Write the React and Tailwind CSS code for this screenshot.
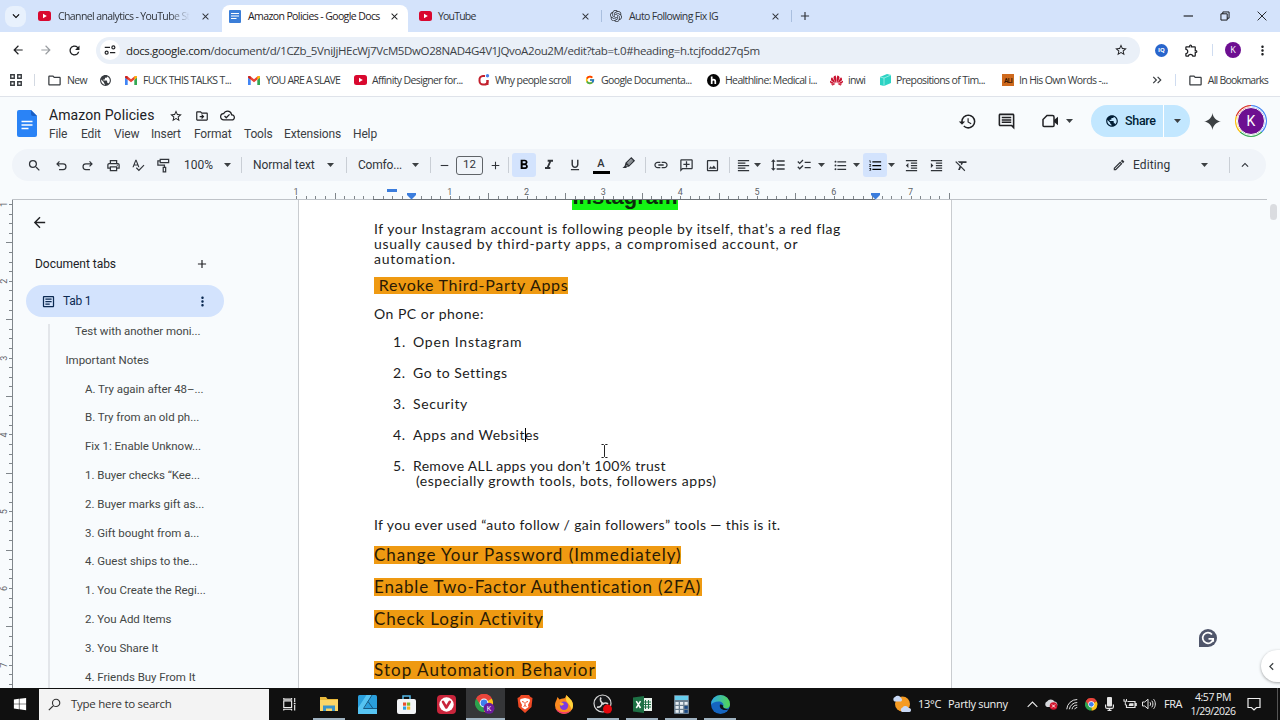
import clsx from "clsx";
import {
  MdAdd, MdArrowBack, MdArrowForward, MdChecklist, MdClose, MdFormatAlignLeft, MdFormatBold,
  MdFormatClear, MdFormatIndentDecrease, MdFormatIndentIncrease, MdFormatItalic, MdFormatLineSpacing,
  MdFormatListBulleted, MdFormatListNumbered, MdFormatUnderlined, MdHistory, MdKeyboardArrowDown,
  MdKeyboardArrowLeft, MdKeyboardArrowUp, MdLink, MdMoreVert, MdOutlineAddComment, MdOutlineArticle,
  MdOutlineCloudDone, MdOutlineComment, MdOutlineDriveFileMove, MdOutlineEdit, MdOutlineExtension,
  MdOutlineFolder, MdOutlineImage, MdOutlinePrint, MdPublic, MdRefresh, MdRemove, MdSearch, MdSpellcheck,
  MdStarBorder,
} from "react-icons/md";
import { SiOpenai, SiHuawei } from "react-icons/si";
import { FcGoogle } from "react-icons/fc";
import { FaWindows } from "react-icons/fa";

const UI = "font-['Open_Sans',sans-serif]";
const DOCS = "font-[Roboto,sans-serif]";

/* ---------- logos ---------- */

const YouTube = () => (
  <svg width="13" height="10" viewBox="0 0 13 10">
    <rect width="13" height="10" rx="2.5" fill="#d9082f" />
    <path d="M5 2.8 8.8 5 5 7.2Z" fill="#fff" />
  </svg>
);

const DocsFavicon = () => (
  <svg width="12" height="13" viewBox="0 0 12 13" className="shrink-0">
    <rect width="12" height="13" rx="1" fill="#3b7ed8" />
    <path d="M2 3.5h8M2 6h8M2 8.500h5.500" stroke="#fff" strokeWidth="1.2" />
  </svg>
);

const Gmail = () => (
  <svg width="12" height="9" viewBox="0 0 12 9">
    <path d="M0 1.500V9h2.700V4Z" fill="#4285f4" />
    <path d="M12 1.500V9H9.300V4Z" fill="#34a853" />
    <path d="M0 1.500C0 0 1.600-.4 2.700.6L6 3.200 9.300.6C10.400-.4 12 0 12 1.500L6 6.300Z" fill="#ea4335" />
    <path d="M9.300.6C10.400-.4 12 0 12 1.500L9.300 3.700Z" fill="#fbbc04" />
    <path d="M0 1.500C0 0 1.600-.4 2.700.6v3.100Z" fill="#c5221f" />
  </svg>
);

const DocsLogo = () => (
  <svg width="20" height="27" viewBox="0 0 20 27">
    <path d="M2 0h12l6 6v19a2 2 0 0 1-2 2H2a2 2 0 0 1-2-2V2a2 2 0 0 1 2-2Z" fill="#2a83f6" />
    <path d="M14 0v4a2 2 0 0 0 2 2h4Z" fill="#1a5fc4" />
    <path d="M4.500 11.500h11M4.500 15h11M4.500 18.500h7" stroke="#fff" strokeWidth="1.500" />
  </svg>
);

const Chrome = ({ size = 18, badge }) => (
  <svg width={size + 2} height={size + 2} viewBox="0 0 20 20">
    <path d="M9 9 1.200 4.500A9 9 0 0 1 16.800 4.500Z" fill="#e8453c" />
    <path d="M9 9 16.800 4.500A9 9 0 0 1 9 18Z" fill="#fbc116" />
    <path d="M9 9v9A9 9 0 0 1 1.200 4.500Z" fill="#2ca24c" />
    <path d="M9 5h7.200l.6-.5A9 9 0 0 0 1.200 4.500L5.500 11Z" fill="#e8453c" />
    <circle cx="9" cy="9" r="4.400" fill="#fff" />
    <circle cx="9" cy="9" r="3.400" fill="#3f7fee" />
    {badge && (
      <>
        <circle cx="14" cy="14.300" r="5.500" fill="#6a1b9a" />
        <text x="14" y="16.800" textAnchor="middle" fontSize="7" fill="#fff" fontFamily="Roboto">K</text>
      </>
    )}
  </svg>
);

const Why = () => (
  <svg width="12" height="12" viewBox="0 0 12 12" fill="none">
    <path d="M7 2H5a3.500 3.500 0 0 0-3.500 4v1A3.500 3.500 0 0 0 5 10.500h1.500A3 3 0 0 0 9.500 8V6" stroke="#c3202d" strokeWidth="2" />
    <path d="M9.500 6v5" stroke="#c3202d" strokeWidth="2" />
    <circle cx="9.500" cy="1.800" r="1.700" fill="#4a80e8" />
  </svg>
);

const Healthline = () => (
  <svg width="13" height="13" viewBox="0 0 13 13">
    <circle cx="6.500" cy="6.500" r="6.500" fill="#050505" />
    <path d="M4.700 2.500v7.500M4.700 7.500c0-2.400 3.600-2.400 3.600 0V10" stroke="#fff" strokeWidth="1.700" fill="none" />
  </svg>
);

const GreenBook = () => (
  <svg width="11" height="12" viewBox="0 0 11 12">
    <path d="M0 3 7 0l4 1v8l-7 3-4-1Z" fill="#2cd3c4" />
    <path d="M0 3l4 1 7-3M4 4v8" stroke="#a5f3ea" strokeWidth=".8" fill="none" />
  </svg>
);

const AliIcon = () => (
  <svg width="12" height="12" viewBox="0 0 12 12">
    <rect width="12" height="12" fill="#cf6a1d" />
    <text x="6" y="8.500" textAnchor="middle" fontSize="6.500" fontWeight="700" fill="#3a1a05" fontFamily="Roboto">ALI</text>
  </svg>
);

/* ---------- small drawn icons ---------- */

const Line = ({ size = 14, d, w = 1.5, vb = "0 0 16 16" }) => (
  <svg width={size} height={size} viewBox={vb} className="shrink-0" fill="none" stroke="currentColor" strokeWidth={w}>
    <path d={d} />
  </svg>
);

const Undo = () => <Line size={13} d="M5.500 3 2.500 6l3 3M2.500 6H10a3.500 3.500 0 0 1 0 7H5" />;
const Redo = () => <Line size={13} d="M10.500 3l3 3-3 3M13.500 6H6a3.500 3.500 0 0 0 0 7h5" />;
const PaintRoller = () => <Line size={15} d="M4.500 1.500h9v3.500h-9ZM4.500 3H2v4.500h7V10M7.700 10h2.600v4.800H7.700Z" w={1.300} />;
const Apps = () => <Line size={14} d="M2 2h4v4H2ZM10 2h4v4h-4ZM2 10h4v4H2ZM10 10h4v4h-4Z" w={1.600} />;
const Tune = () => <Line size={12} d="M1 4.500h7M12.500 2.500a2 2 0 1 1 0 4 2 2 0 0 1 0-4ZM15 11.500H8M3.500 9.500a2 2 0 1 1 0 4 2 2 0 0 1 0-4Z" w={1.600} />;
const Highlighter = () => (
  <svg width="15" height="15" viewBox="0 0 16 16" fill="none" stroke="currentColor" strokeWidth="1.400">
    <path d="M5.500 7.500 11 2l3 3-5.500 5.500ZM5.500 7.500l-1 3.500 4-.5" />
    <path d="M6.500 8 11.500 3l1.700 1.700-5 5Z" fill="currentColor" fillOpacity=".55" stroke="none" />
    <path d="M4.500 10 1.500 12.800h4l.8-1Z" fill="currentColor" stroke="none" />
  </svg>
);
const Video = () => (
  <svg width="17" height="14" viewBox="0 0 17 14" fill="none" stroke="currentColor" strokeWidth="1.500">
    <path d="M5 1.500h5.500a1.500 1.500 0 0 1 1.500 1.500v8.500a1 1 0 0 1-1 1H2a1 1 0 0 1-1-1v-6Z" />
    <path d="M12 6l4-3.200v8.400L12 8Z" fill="currentColor" stroke="none" />
  </svg>
);
const Spark = () => (
  <svg width="17" height="17" viewBox="0 0 16 16" fill="#3c4043">
    <path d="M8 0C8.600 4.400 11.600 7.400 16 8 11.600 8.600 8.600 11.600 8 16 7.400 11.600 4.400 8.600 0 8 4.400 7.400 7.400 4.400 8 0Z" />
  </svg>
);

const Caret = () => (
  <svg width="7" height="4" viewBox="0 0 7 4" className="shrink-0">
    <path d="M0 0h7L3.500 4Z" fill="#3c4043" />
  </svg>
);

/* ---------- browser chrome ---------- */

const Sep = ({ className }) => <div className={clsx("w-px shrink-0", className)} />;

function TabStrip() {
  return (
    <div className="flex h-8 items-center bg-[#d4e3fb] pl-[5px] text-[10.5px] tracking-[-0.6px] text-[#30343a]">
      <div className="flex size-[21px] shrink-0 items-center justify-center rounded-lg bg-[#e8f1fd] text-black">
        <MdKeyboardArrowDown size={14} />
      </div>
      <div className="ml-3 shrink-0"><YouTube /></div>
      <div className="ml-[7px] w-[132px] shrink-0 overflow-hidden pt-[2px] whitespace-nowrap [mask-image:linear-gradient(to_right,black_84%,transparent)]">
        Channel analytics - YouTube Studio
      </div>
      <MdClose size={11} className="ml-[10px] shrink-0" />
      <div className="ml-[11px] flex h-[27px] w-[186px] shrink-0 items-center self-end rounded-t-lg bg-white pr-[8px] pb-[5px] pl-[7px] text-[#1f2023]">
        <DocsFavicon />
        <span className="ml-[7px] pt-[2px] whitespace-nowrap">Amazon Policies - Google Docs</span>
        <MdClose size={11} className="ml-auto shrink-0" />
      </div>
      <div className="ml-[11px] shrink-0"><YouTube /></div>
      <div className="ml-[6px] w-[142px] shrink-0 pt-[2px] tracking-[-0.8px]">YouTube</div>
      <MdClose size={11} className="shrink-0" />
      <Sep className="ml-[10px] h-3 bg-[#a9bfdf]" />
      <SiOpenai size={12} className="ml-[8px] shrink-0" />
      <div className="ml-[7px] w-[141px] shrink-0 pt-[2px]">Auto Following Fix IG</div>
      <MdClose size={11} className="shrink-0" />
      <Sep className="ml-[10px] h-3 bg-[#a9bfdf]" />
      <MdAdd size={14} className="ml-[6px] shrink-0" />
      <div className="ml-auto flex items-center text-black">
        <div className="flex w-[37px] justify-center"><Line size={10} d="M1 8h15" w={1.600} /></div>
        <div className="flex w-[37px] justify-center"><Line size={10} d="M1.500 4.500h10v10h-10ZM4.500 4.500V1.500h10v10h-3" w={1.400} /></div>
        <div className="flex w-[37px] justify-center"><Line size={10} d="M1 1l14 14M15 1 1 15" w={1.300} /></div>
      </div>
    </div>
  );
}

function AddressBar() {
  return (
    <div className="flex h-9 items-center bg-white pl-[11px] text-[#1f2023]">
      <MdArrowBack size={14} className="shrink-0" />
      <MdArrowForward size={14} className="ml-[14px] shrink-0 text-[#9a9da1]" />
      <MdRefresh size={15} className="ml-[14px] shrink-0" />
      <div className="ml-[14px] flex h-[27px] w-[1044px] items-center rounded-full bg-[#eaf0f8] px-[4px]">
        <div className="flex size-[20px] shrink-0 items-center justify-center rounded-full bg-white"><Tune /></div>
        <span className="ml-[6px] pt-px text-[11.5px] tracking-[-0.37px] whitespace-nowrap text-[#3c4146]">
          <span className="text-[#1b1d20]">docs.google.com</span>
          /document/d/1CZb_5VniJjHEcWj7VcM5DwO28NAD4G4V1JQvoA2ou2M/edit?tab=t.0#heading=h.tcjfodd27q5m
        </span>
        <MdStarBorder size={14} className="mr-[8px] ml-auto shrink-0" />
      </div>
      <div className="ml-[15px] flex size-[13px] shrink-0 items-center justify-center rounded-full bg-[#2865cc] text-[6px] font-bold text-white">IQ</div>
      <MdOutlineExtension size={15} className="ml-[16px] shrink-0" />
      <Sep className="ml-[13px] h-3 bg-[#cfdcf0]" />
      <div className="ml-[12px] flex size-4 shrink-0 items-center justify-center rounded-full bg-[#6d0f91] text-[9px] text-white">K</div>
      <MdMoreVert size={15} className="ml-[14px] shrink-0" />
    </div>
  );
}

const bookmarks = [
  { icon: <MdOutlineFolder size={15} />, label: "New", width: "w-[52px]", gap: "gap-[5px]" },
  { icon: <MdPublic size={13} />, label: "", width: "w-[26px]", gap: "gap-[5px]" },
  { icon: <Gmail />, label: "FUCK THIS TALKS T...", width: "w-[123px]", gap: "gap-[6px]" },
  { icon: <Gmail />, label: "YOU ARE A SLAVE", width: "w-[106px]", gap: "gap-[6px] tracking-[-0.75px]" },
  { icon: <YouTube />, label: "Affinity Designer for...", width: "w-[124px]", gap: "gap-[5px]" },
  { icon: <Why />, label: "Why people scroll", width: "w-[107px]", gap: "gap-[5px]" },
  { icon: <FcGoogle size={10} />, label: "Google Documenta...", width: "w-[122px]", gap: "gap-[6px]" },
  { icon: <Healthline />, label: "Healthline: Medical i...", width: "w-[123px]", gap: "gap-[5px]" },
  { icon: <SiHuawei size={13} color="#c8102e" />, label: "inwi", width: "w-[50px]", gap: "gap-[5px]" },
  { icon: <GreenBook />, label: "Prepositions of Tim...", width: "w-[122px]", gap: "gap-[5px]" },
  { icon: <AliIcon />, label: "In His Own Words -...", width: "w-[140px]", gap: "gap-[5px]" },
];

function BookmarkBar() {
  return (
    <div className="flex h-[29px] items-center border-b border-[#dfe3ea] bg-white pr-[12px] pb-[4px] pl-[9px] text-[10.5px] tracking-[-0.63px] text-[#383c40]">
      <Apps />
      <Sep className="mr-[12px] ml-[11px] h-3 bg-[#d3d9e2]" />
      {bookmarks.map(({ icon, label, width, gap }, i) => (
        <div key={i} className={clsx("flex shrink-0 items-center whitespace-nowrap", width, gap)}>
          <span className="shrink-0">{icon}</span>
          <span className="pt-px">{label}</span>
        </div>
      ))}
      <div className="ml-auto flex items-center">
        <Line size={10} d="M2 3l5 5-5 5M9 3l5 5-5 5" w={1.900} />
        <Sep className="ml-[13px] h-3 bg-[#cfdcf0]" />
        <MdOutlineFolder size={15} className="ml-[12px]" />
        <span className="ml-[5px] pt-px tracking-[-0.75px] whitespace-nowrap">All Bookmarks</span>
      </div>
    </div>
  );
}

/* ---------- docs header ---------- */

const menus = [
  ["File", "w-[32px]"], ["Edit", "w-[33px]"], ["View", "w-[37px]"], ["Insert", "w-[43px]"],
  ["Format", "w-[50px]"], ["Tools", "w-[40px]"], ["Extensions", "w-[69px]"], ["Help", "w-[30px]"],
];

function DocsHeader() {
  return (
    <div className="flex h-[52px] text-[#202124]">
      <div className="mt-[13px] ml-[17px]"><DocsLogo /></div>
      <div className="ml-[12px] pt-[8px]">
        <div className="flex h-5 items-center">
          <span className="w-[120px] text-[14px] whitespace-nowrap tracking-[0.1px]">Amazon Policies</span>
          <MdStarBorder size={14} className="mt-px" />
          <MdOutlineDriveFileMove size={14} className="mt-px ml-[12px]" />
          <MdOutlineCloudDone size={15} className="mt-px ml-[11px]" />
        </div>
        <div className="mt-px flex h-4 items-center text-[12px] tracking-[-0.15px] text-[#3c4043]">
          {menus.map(([label, width]) => (
            <span key={label} className={width}>{label}</span>
          ))}
        </div>
      </div>
      <div className="mr-[13px] ml-auto flex h-[48px] items-center">
        <MdHistory size={19} />
        <MdOutlineComment size={19} className="ml-[20px]" />
        <div className="ml-[26px]"><Video /></div>
        <div className="ml-[7px]"><Caret /></div>
        <div className="ml-[18px] flex h-8 overflow-hidden rounded-full bg-[#c2e7ff] text-[#001d35]">
          <div className="flex w-[72px] items-center pl-[14px] text-[12.5px] font-medium">
            <MdPublic size={14} />
            <span className="ml-[6px] tracking-[-0.3px]">Share</span>
          </div>
          <div className="flex w-[27px] items-center justify-center border-l border-white"><Caret /></div>
        </div>
        <div className="ml-[14px]"><Spark /></div>
        <div className="ml-[14px] flex size-8 items-center justify-center rounded-full bg-[conic-gradient(#4285f4_0_38%,#34a853_38%_62%,#fbbc04_62%_80%,#d93025_80%_100%)]">
          <div className="flex size-[28px] items-center justify-center rounded-full border border-white bg-[#6d0f91] text-[14px] text-white outline outline-white">K</div>
        </div>
      </div>
    </div>
  );
}

const Slot = ({ w, className, children }) => (
  <div className={clsx("flex h-6 shrink-0 items-center justify-center", w, className)}>{children}</div>
);

const Divider = ({ w }) => (
  <Slot w={w}><Sep className="h-4 bg-[#c9ced5]" /></Slot>
);

function Toolbar() {
  return (
    <div className="mr-[14px] ml-[12px] flex h-8 items-center rounded-full bg-[#f0f4f9] pl-[9px] text-[12px] text-[#30343a]">
      <Slot w="w-[26px]"><MdSearch size={15} /></Slot>
      <Slot w="w-[28px]"><Undo /></Slot>
      <Slot w="w-[25px]"><Redo /></Slot>
      <Slot w="w-[26px]"><MdOutlinePrint size={15} /></Slot>
      <Slot w="w-[24px]"><MdSpellcheck size={14} /></Slot>
      <Slot w="w-[26px]"><PaintRoller /></Slot>
      <div className="ml-[8px] w-[31px]">100%</div>
      <Slot w="w-[24px]"><Caret /></Slot>
      <Divider w="w-[4px]" />
      <div className="ml-[10px] w-[67px] tracking-[-0.08px] whitespace-nowrap">Normal text</div>
      <Slot w="w-[20px]"><Caret /></Slot>
      <Divider w="w-[12px]" />
      <div className="ml-[6px] w-[47px] tracking-[-0.2px]">Comfo...</div>
      <Slot w="w-[20px]"><Caret /></Slot>
      <Divider w="w-[10px]" />
      <Slot w="w-[18px]"><MdRemove size={13} /></Slot>
      <div className="ml-[3px] flex h-[19px] w-[27px] items-center justify-center rounded-[3px] border border-[#5f6368] text-[11.5px]">12</div>
      <Slot w="w-[24px]"><MdAdd size={13} /></Slot>
      <Divider w="w-[2px]" />
      <Slot w="w-[24px]" className="ml-[3px] rounded-[3px] bg-[#d3e3fd] text-black"><MdFormatBold size={16} /></Slot>
      <Slot w="w-[26px]"><MdFormatItalic size={16} /></Slot>
      <Slot w="w-[26px]"><MdFormatUnderlined size={14} /></Slot>
      <Slot w="w-[26px]" className="flex-col">
        <span className="mt-[2px] text-[11px] leading-[10px] font-medium">A</span>
        <div className="mt-[2px] h-[3px] w-[17px] bg-black" />
      </Slot>
      <Slot w="w-[29px]" className="pb-[4px]"><Highlighter /></Slot>
      <Divider w="w-[4px]" />
      <Slot w="w-[28px]"><MdLink size={16} /></Slot>
      <Slot w="w-[22px]"><MdOutlineAddComment size={15} className="-scale-x-100" /></Slot>
      <Slot w="w-[31px]"><MdOutlineImage size={15} /></Slot>
      <Divider w="w-[2px]" />
      <Slot w="w-[18px]" className="ml-[4px]"><MdFormatAlignLeft size={15} /></Slot>
      <Slot w="w-[10px]"><Caret /></Slot>
      <Slot w="w-[32px]"><MdFormatLineSpacing size={16} /></Slot>
      <Slot w="w-[20px]"><MdChecklist size={16} /></Slot>
      <Slot w="w-[14px]"><Caret /></Slot>
      <Slot w="w-[24px]"><MdFormatListBulleted size={15} /></Slot>
      <Slot w="w-[8px]"><Caret /></Slot>
      <Slot w="w-[24px]" className="ml-[3px] rounded-[3px] bg-[#d3e3fd] text-black"><MdFormatListNumbered size={15} /></Slot>
      <Slot w="w-[9px]"><Caret /></Slot>
      <Slot w="w-[28px]" className="ml-px"><MdFormatIndentDecrease size={15} /></Slot>
      <Slot w="w-[22px]"><MdFormatIndentIncrease size={15} /></Slot>
      <Slot w="w-[28px]"><MdFormatClear size={15} /></Slot>

      <div className="mr-[7px] ml-auto flex items-center">
        <Slot w="w-[20px]"><MdOutlineEdit size={14} /></Slot>
        <div className="ml-[4px] w-[63px] tracking-[0.1px]">Editing</div>
        <Slot w="w-[16px]" className="mr-[15px]"><Caret /></Slot>
        <Divider w="w-[4px]" />
        <Slot w="w-[28px]"><MdKeyboardArrowUp size={14} /></Slot>
      </div>
    </div>
  );
}

/* ---------- rulers ---------- */

const INCH = 76.8;

function HorizontalRuler() {
  const ticks = [...Array(69)].map((_, i) => i);
  const labels = [[1, 296], ...[1, 2, 3, 4, 5, 6, 7].map((n) => [n, 373 + n * INCH])];
  return (
    <svg width="1280" height="19" className="block">
      {ticks.map((i) => {
        const x = Math.round(296.2 + i * (INCH / 8)) + 0.5;
        return <path key={i} d={`M${x} ${i % 8 === 4 ? 12 : 15}V18`} stroke="#80868b" />;
      })}
      {labels.map(([n, x]) => (
        <text key={x} x={x} y="13.500" textAnchor="middle" fontSize="9" fill="#5f6368" fontFamily="Roboto">{n}</text>
      ))}
      <path d="M12 18.500H1267" stroke="#bfc3c8" />
      <path d="M373 18.500H875" stroke="#6f7479" />
      <rect x="387" y="8" width="10" height="3" fill="#3b7ddd" />
      <path d="M407 12h9v2l-4.500 4.500L407 14ZM871 12h9v2l-4.500 4.500L871 14Z" fill="#3b7ddd" />
    </svg>
  );
}

function VerticalRuler() {
  return (
    <svg width="13" height="488" className="block shrink-0">
      {[...Array(51)].map((_, i) => {
        const y = Math.round(4 + i * (INCH / 8)) + 0.5;
        return <path key={i} d={`M${i % 8 === 4 ? 6 : 9} ${y}H12`} stroke="#80868b" />;
      })}
      {[1, 2, 3, 4, 5, 6, 7].map((n, i) => (
        <text
          key={n}
          transform={`translate(7 ${4.500 + i * INCH}) rotate(-90)`}
          textAnchor="middle"
          fontSize="9"
          fill="#5f6368"
          fontFamily="Roboto"
        >
          {n}
        </text>
      ))}
      <path d="M12.500 0V488" stroke="#80868b" />
    </svg>
  );
}

/* ---------- outline panel ---------- */

const outline = [
  ["Test with another moni...", "pl-[25px]"],
  ["Important Notes", "pl-[15.500px]"],
  ["A. Try again after 48–...", "pl-[35px]"],
  ["B. Try from an old ph...", "pl-[35px]"],
  ["Fix 1: Enable Unknow...", "pl-[35px]"],
  ["1. Buyer checks “Kee...", "pl-[35px]"],
  ["2. Buyer marks gift as...", "pl-[35px]"],
  ["3. Gift bought from a...", "pl-[35px]"],
  ["4. Guest ships to the...", "pl-[35px]"],
  ["1. You Create the Regi...", "pl-[35px]"],
  ["2. You Add Items", "pl-[35px]"],
  ["3. You Share It", "pl-[35px]"],
  ["4. Friends Buy From It", "pl-[35px]"],
];

function OutlinePanel() {
  return (
    <div className="w-[285px] shrink-0 text-[11.5px] tracking-[-0.03px] text-[#444746]">
      <MdArrowBack size={17} className="mt-[14px] ml-[18px] text-[#202124]" />
      <div className="mt-[24px] flex h-[18px] items-center pl-[22px] text-[12px] text-[#202124]">
        <span className="w-[160px]">Document tabs</span>
        <MdAdd size={14} />
      </div>
      <div className="mt-[12px] ml-[13px] flex h-8 w-[198px] items-center rounded-full bg-[#d3e3fd] pl-[15px] text-[12px] text-[#0b2a52]">
        <MdOutlineArticle size={15} />
        <span className="ml-[7px] w-[132px] tracking-[-0.25px]">Tab 1</span>
        <MdMoreVert size={15} />
      </div>
      <div className="mt-[7px] ml-[35px] border-l-2 border-[#e3e6ea]">
        {outline.map(([label, indent], i) => (
          <div key={label} className={clsx("flex items-center whitespace-nowrap", indent, i === 0 ? "h-[22px] pb-[6px]" : "h-[28.800px]")}>
            {label}
          </div>
        ))}
      </div>
    </div>
  );
}

/* ---------- document ---------- */

const Mark = ({ className, children }) => (
  <div className={clsx("flex items-center bg-[#ef9a12] pb-[2px] whitespace-pre text-[#2a1a05]", className)}>{children}</div>
);

const steps = [
  ["Open Instagram", "mt-[12px] tracking-[0.8px]"],
  ["Go to Settings", "mt-[13px] tracking-[0.5px]"],
  ["Security", "mt-[13px] tracking-[0.6px]"],
  ["Apps and Websites", "mt-[13px] tracking-[0.52px]"],
  ["Remove ALL apps you don’t 100% trust", "mt-[13px] tracking-[0.33px]"],
];

function Page() {
  return (
    <div className="relative h-[488px] w-[654px] shrink-0 overflow-hidden border-x border-[#c9ccd0] bg-white pl-[75px] font-[Lato,sans-serif] text-[14px] leading-[15px] text-[#1c1c1c]">
      <div className="-mt-[16px] ml-[198px] flex h-[26px] w-[106px] items-center justify-center bg-[#14f514] font-['Liberation_Sans',sans-serif] text-[22px] leading-none font-bold text-[#0c2b0c]">
        Instagram
      </div>
      <div className="mt-[11px] whitespace-nowrap">
        <p className="tracking-[0.56px]">If your Instagram account is following people by itself, that’s a red flag</p>
        <p className="tracking-[0.72px]">usually caused by third-party apps, a compromised account, or</p>
        <p className="tracking-[0.75px]">automation.</p>
      </div>
      <Mark className="mt-[11px] h-[17px] w-[194px] text-[16px] tracking-[0.72px]"> Revoke Third-Party Apps</Mark>
      <p className="mt-[12px] tracking-[0.5px]">On PC or phone:</p>
      {steps.map(([text, gap], i) => (
        <div key={text} className={clsx("flex pl-[19px] whitespace-nowrap", gap)}>
          <span className="h-[18px] w-[20px] pt-px">{i + 1}.</span>
          <span className="pt-px">{text}</span>
        </div>
      ))}
      <p className="-mt-[2px] pl-[42px] tracking-[0.52px]">(especially growth tools, bots, followers apps)</p>
      <p className="mt-[29px] tracking-[0.38px]">If you ever used “auto follow / gain followers” tools — this is it.</p>
      <Mark className="mt-[14px] h-[18px] w-[307px] text-[17px] tracking-[0.99px]">Change Your Password (Immediately)</Mark>
      <Mark className="mt-[14px] h-[18px] w-[328px] text-[17px] tracking-[0.82px]">Enable Two-Factor Authentication (2FA)</Mark>
      <Mark className="mt-[14px] h-[18px] w-[169px] text-[17px] tracking-[0.88px]">Check Login Activity</Mark>
      <Mark className="mt-[33px] h-[18px] w-[222px] text-[17px] tracking-[1.05px]">Stop Automation Behavior</Mark>

      {/* text caret and mouse pointer */}
      <div className="absolute top-[228px] left-[226px] h-[14px] w-px bg-black" />
      <svg width="7" height="14" className="absolute top-[244px] left-[302px]" fill="none" stroke="#222">
        <path d="M.5.5h2l1 1 1-1h2M3.500 1.500v11M.5 13.500h2l1-1 1 1h2" />
      </svg>
    </div>
  );
}

function Workspace() {
  return (
    <div className="relative flex h-[488px] overflow-hidden">
      <VerticalRuler />
      <OutlinePanel />
      <Page />
      <div className="mt-[4px] mr-[3px] ml-auto h-4 w-[7px] rounded-full bg-[#dadce0]" />
      <svg width="18" height="18" viewBox="0 0 18 18" className="absolute top-[429px] left-[1199px]" fill="none">
        <path d="M9 0a9 9 0 1 1 0 18H0V9a9 9 0 0 1 9-9Z" fill="#50566b" />
        <path d="M13 5.500A5.300 5.300 0 1 0 14.200 10M9.500 9.800h4.700v3" stroke="#fff" strokeWidth="1.700" />
      </svg>
      <div className="absolute top-[450px] left-[1261px] flex h-8 w-10 items-center rounded-l-full bg-white pl-[3px] shadow-[0_1px_3px_rgba(0,0,0,0.35)]">
        <MdKeyboardArrowLeft size={15} className="text-[#3c4043]" />
      </div>
    </div>
  );
}

/* ---------- windows taskbar ---------- */

const Explorer = () => (
  <svg width="18" height="16" viewBox="0 0 18 16">
    <path d="M0 1h6l1.500 2H18v12H0Z" fill="#e9b93b" />
    <path d="M0 4h18v11H0Z" fill="#fbd667" />
    <path d="M3 15V9.500h12V15h-3v-2.500H6V15Z" fill="#3a94c9" />
  </svg>
);
const Affinity = () => (
  <svg width="19" height="19" viewBox="0 0 19 19" fill="none">
    <rect width="19" height="19" rx="1.500" fill="#2a9fdc" />
    <path d="M0 13 8.500 0H14L6.500 13H19v6H0Z" fill="#56c4f2" />
    <path d="M14 0 5.500 13.500H19M10 6.500l5 7" stroke="#175a84" />
  </svg>
);
const Store = () => (
  <svg width="19" height="19" viewBox="0 0 19 19" fill="none">
    <path d="M6 5V1h7v4" stroke="#53b8e8" strokeWidth="1.500" />
    <rect y="4" width="19" height="15" rx="2" fill="#f2f4f6" />
    <path d="M6 7.500h3.200v3.200H6Z" fill="#e8502e" />
    <path d="M10 7.500h3.200v3.200H10Z" fill="#7cb82f" />
    <path d="M6 11.500h3.200v3.200H6Z" fill="#2a9fe0" />
    <path d="M10 11.500h3.200v3.200H10Z" fill="#f6b521" />
  </svg>
);
const Vivaldi = () => (
  <svg width="19" height="19" viewBox="0 0 19 19">
    <rect width="19" height="19" rx="4" fill="#c9253b" />
    <circle cx="9.500" cy="9.500" r="7.200" fill="#fff" />
    <path d="M6 6.800 9.300 12.500 12.800 6.800" stroke="#c9253b" strokeWidth="2.600" strokeLinecap="round" strokeLinejoin="round" fill="none" />
  </svg>
);
const Brave = () => (
  <svg width="16" height="18" viewBox="0 0 16 18" fill="none">
    <path d="M4 0h8l1.500 2L15.500 3 14.500 12 8 18 1.500 12 .5 3l2-1Z" fill="#ef4a25" />
    <path d="M3.500 4 8 3l4.500 1 .5 2-2 4 .5 2L8 14.500 4.500 12 5 10 3 6Z" fill="#fff" />
    <path d="M5 6.500l2 .7M11 6.500l-2 .7M8 7v4M6.500 11.500 8 10.700l1.500.8" stroke="#ef4a25" />
  </svg>
);
const Firefox = () => (
  <svg width="18" height="19" viewBox="0 0 18 19">
    <path d="M1.500 5 2.500 2l2 2.500C7 3 9.500 3.500 10 3L11.500 0C13 3 18 4.500 18 10.500a9 8.500 0 0 1-18 0C0 8 .6 6.500 1.500 5Z" fill="#fb8a1f" />
    <path d="M11.500 0C13 3 18 4.500 18 10.500c0 1.500-.5 3-1.300 4.300C15 9 12 8 11 5Z" fill="#ffd43a" />
    <path d="M.4 12.500A9 8.500 0 0 0 16 15.500C10 19 3 17 .4 12.500Z" fill="#f0307a" />
    <circle cx="9" cy="10.800" r="4.200" fill="#7a3be0" />
    <path d="M4.500 8c2-1 4 0 4.500 1.500-1.500.5-2 1.500-3.500 1Z" fill="#ffb52e" />
  </svg>
);
const Obs = () => (
  <svg width="20" height="20" viewBox="0 0 20 20" fill="none">
    <circle cx="9.500" cy="9.500" r="8.500" fill="#17181a" stroke="#d8d8d8" strokeWidth="1.200" />
    <path d="M8 3.500a4 4 0 0 0 2.500 6M4 13a4 4 0 0 0 5-4M15 10a4 4 0 0 0-5.500.5" stroke="#d8d8d8" strokeWidth="1.600" />
    <circle cx="14.500" cy="15" r="4.500" fill="#e5080e" />
  </svg>
);
const Excel = () => (
  <svg width="19" height="17" viewBox="0 0 19 17">
    <path d="M9 2h10v13H9Z" fill="#e9f3ec" />
    <path d="M12.500 4v9M15.500 4v9M11 6h7M11 8.500h7M11 11h7" stroke="#1d7044" />
    <path d="M0 1.500 11 0v17L0 15.500Z" fill="#1d7044" />
    <path d="M3.300 5.200 7.500 12M7.500 5.200 3.300 12" stroke="#fff" strokeWidth="1.500" />
  </svg>
);
const Calculator = () => (
  <svg width="15" height="19" viewBox="0 0 15 19">
    <rect width="15" height="19" rx="1" fill="#6b7f8f" />
    <path d="M1 1h13v4H1Z" fill="#67cdec" />
    {[7, 11, 15].map((y) => [1.5, 6, 10.5].map((x) => (
      <rect key={`${x}-${y}`} x={x} y={y} width="3.200" height="2.800" fill={x > 10 && y > 7 ? "#1b4a86" : "#e6edf2"} />
    )))}
  </svg>
);
const Edge = () => (
  <svg width="19" height="19" viewBox="0 0 19 19">
    <defs>
      <linearGradient id="edge" x1="0" y1="0" x2="1" y2="0">
        <stop offset="0" stopColor="#2fa8e8" />
        <stop offset="1" stopColor="#52d651" />
      </linearGradient>
    </defs>
    <circle cx="9.500" cy="9.500" r="9.500" fill="#1565c0" />
    <path d="M0 9.500a9.500 9.500 0 0 1 19 0c0 2.500-2 4-4.500 4-2 0-3-.8-2.300-2 1-3-1.500-5-4.700-5C4 6.500 1 8 0 9.500Z" fill="url(#edge)" />
    <path d="M9 9.500c-1 3 1.500 5.500 5 5.500 1.700 0 2.600-.5 3.600-1-3 .3-6.600-1.500-5.300-3.200-.8-.9-2.300-1.600-3.300-1.300Z" fill="#0f1216" />
  </svg>
);

const apps = [
  { icon: <Explorer />, bar: "w-8" },
  { icon: <Affinity /> },
  { icon: <Store /> },
  { icon: <Vivaldi /> },
  { icon: <Chrome badge />, bar: "w-full", active: true },
  { icon: <Brave /> },
  { icon: <Firefox /> },
  { icon: <Obs />, bar: "w-8" },
  { icon: <Excel />, bar: "w-8" },
  { icon: <Calculator />, bar: "w-8" },
  { icon: <Edge />, bar: "w-8" },
];

const Weather = () => (
  <svg width="20" height="18" viewBox="0 0 20 18">
    <circle cx="10.500" cy="9" r="7.500" fill="#f59b23" />
    <path d="M2.500 6.500a2.500 2.500 0 0 1 .5-4.500 3.500 3.500 0 0 1 6 1 2 2 0 0 1 0 3.500Z" fill="#c9d9f5" />
    <path d="M10 17a2.500 2.500 0 0 1 .5-4.500 3.500 3.500 0 0 1 6 .5 2 2 0 0 1 1 4Z" fill="#c9d9f5" />
  </svg>
);
const CloudError = () => (
  <svg width="14" height="12" viewBox="0 0 14 12">
    <path d="M3 9a3 3 0 0 1 0-5.500A4.500 4.500 0 0 1 10.500 3.500 3 3 0 0 1 12 9Z" fill="#d5d8dc" />
    <circle cx="9.500" cy="8" r="3.800" fill="#d0142c" />
    <path d="M8 6.500l3 3M11 6.500l-3 3" stroke="#fff" />
  </svg>
);

function Tray() {
  return (
    <div className="ml-auto flex h-8 items-center text-[11px]">
      <Weather />
      <span className="ml-[6px] w-[30px] tracking-[-0.3px]">13°C</span>
      <span className="w-[79px] tracking-[-0.3px] whitespace-nowrap">Partly sunny</span>
      <Line size={11} d="M1 11.500 8 4.500l7 7" />
      <div className="ml-[6px]"><CloudError /></div>
      <svg width="12" height="12" viewBox="0 0 16 16" className="ml-[8px]" fill="none" stroke="#e8e8e8" strokeWidth="1.300">
        <path d="M1 15A14 14 0 0 1 15 2M4.500 15A10.500 10.500 0 0 1 15 6M8 15a7 7 0 0 1 7-5.500M11.500 15a4 4 0 0 1 3.500-2.500" />
      </svg>
      <div className="mt-px ml-[7px]"><Chrome size={12} /></div>
      <svg width="9" height="14" viewBox="0 0 9 14" className="ml-[6px]" fill="none" stroke="#e4e4e4" strokeWidth="1.200">
        <rect x="2" width="5" height="9.500" rx="1" fill="#e4e4e4" stroke="none" />
        <path d="M.6 7.500v2.500a1.500 1.500 0 0 0 1.500 1.400h4.800a1.500 1.500 0 0 0 1.500-1.400V7.500M4.500 11v2.500M2.500 13.400h4" />
      </svg>
      <svg width="14" height="10" viewBox="0 0 14 10" className="ml-[9px]" fill="none" stroke="#e4e4e4">
        <path d="M4.500 2.500H12v6H3.500V6M13.200 4v3" strokeWidth="1.200" />
        <path d="M6.500 4.300H10.500v2.600H5.500" fill="#e4e4e4" stroke="none" />
        <path d="M1 0v2M3.500 0v2M.5 2.200h3.700M2.300 2.500V6h1.500" />
      </svg>
      <svg width="14" height="12" viewBox="0 0 14 12" className="ml-[5px]" fill="none" stroke="#e4e4e4">
        <path d="M.5 4v4h2.200L6 10.800V1.200L2.700 4ZM8 4.200c.8 1 .8 2.600 0 3.600M9.800 2.700c1.500 1.900 1.500 4.700 0 6.600M11.600 1.200c2.300 2.800 2.300 6.800 0 9.600" />
      </svg>
      <span className="ml-[8px] w-[18px] tracking-[-0.5px]">FRA</span>
      <div className="ml-[6px] w-[50px] text-center text-[10.5px] leading-[14px] tracking-[-0.5px] whitespace-nowrap">
        <div>4:57 PM</div>
        <div>1/29/2026</div>
      </div>
      <svg width="14" height="14" viewBox="0 0 14 14" className="ml-[9px]" fill="none" stroke="#eee" strokeWidth="1.200">
        <path d="M1 1.500h12v9H9.500L7 13l-2.500-2.500H1Z" />
      </svg>
      <div className="mr-[2px] ml-[16px] h-8 w-px bg-[#555]" />
    </div>
  );
}

function Taskbar() {
  return (
    <div className="flex h-8 items-center bg-[#101010] text-[#f0f0f0]">
      <div className="flex w-[39px] shrink-0 justify-center text-white"><FaWindows size={14} /></div>
      <div className="flex h-[31px] w-[230px] shrink-0 items-center bg-[#f3f3f3] pl-[9px] text-[11.5px] text-[#333]">
        <Line size={13} d="M10 1.500a4.500 4.500 0 1 1 0 9 4.500 4.500 0 0 1 0-9ZM6.800 9.200 1 15" w={1.400} />
        <span className="ml-[10px] tracking-[-0.28px]">Type here to search</span>
      </div>
      <div className="flex w-[40px] shrink-0 justify-center">
        <Line size={14} d="M2 4.500h9v7.500H2ZM2 1v1.500h9V1M2 15.500V14h9v1.500M14.500 1v5M14.500 9v6.500M13.500 7.500h2" w={1.300} />
      </div>
      {apps.map(({ icon, bar, active }, i) => (
        <div key={i} className={clsx("relative flex h-full w-[39.200px] shrink-0 items-center justify-center", active && "bg-[#353638]")}>
          {icon}
          {bar && <div className={clsx("absolute bottom-0 h-[2px] bg-[#9fb2c0]", bar)} />}
        </div>
      ))}
      <Tray />
    </div>
  );
}

export default function App() {
  return (
    <div className={clsx("h-[720px] w-[1280px] overflow-hidden bg-[#f8fbfd]", UI)}>
      <TabStrip />
      <AddressBar />
      <BookmarkBar />
      <div className={DOCS}>
        <DocsHeader />
        <Toolbar />
        <HorizontalRuler />
        <Workspace />
      </div>
      <Taskbar />
    </div>
  );
}
